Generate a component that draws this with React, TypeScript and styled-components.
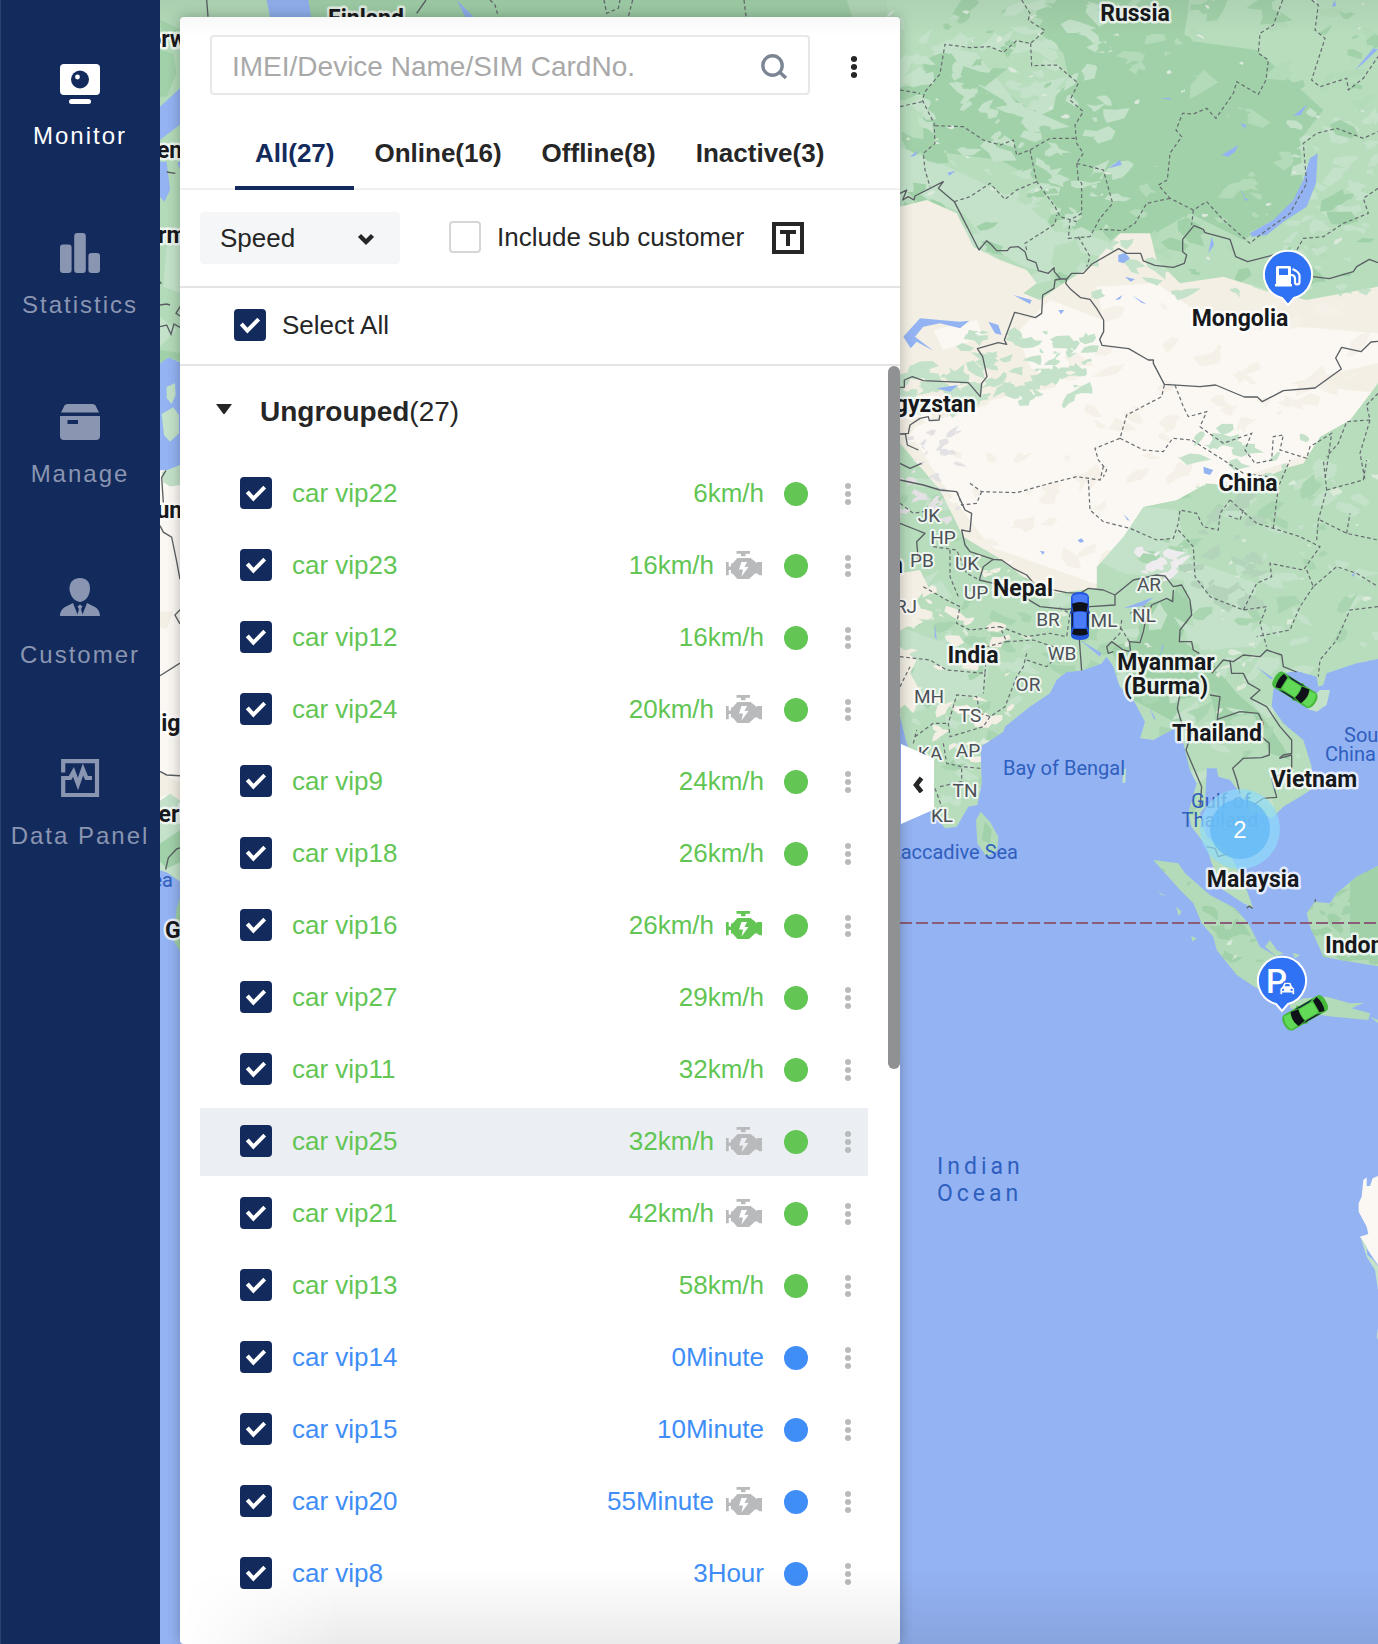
import React, { useId, useState } from 'react';
import styled, { createGlobalStyle } from 'styled-components';

const navy = '#132a5c';
const ink = '#262626';
const green = '#62c554';
const blue = '#3f8ef7';
const sans = '"Liberation Sans", Arial, Helvetica, sans-serif';

const GlobalStyle = createGlobalStyle`
  * { box-sizing: border-box; }
  body { margin: 0; background: #94b3f3; font-family: ${sans}; color: ${ink}; }
  button, input, select { font-family: inherit; color: inherit; }
  button { border: 0; padding: 0; background: none; cursor: pointer; }
`;

/* ---------- page frame ---------- */

const Page = styled.div`
  display: flex;
  min-height: 100vh;
`;

const Sidebar = styled.nav`
  flex: none;
  width: 160px;
  padding-top: 64px;
  display: flex;
  flex-direction: column;
  gap: 83px;
  background: ${navy};
  box-shadow: inset 1px 0 #2b3f6c;
`;

const NavButton = styled.button<{ $active?: boolean }>`
  display: flex;
  flex-direction: column;
  align-items: center;
  gap: 18px;
  font-size: 24px;
  line-height: 28px;
  letter-spacing: 2px;
  white-space: nowrap;
  color: ${(p) => (p.$active ? '#ffffff' : '#8a95b1')};
`;

const Main = styled.main`
  flex: 1;
  min-width: 0;
  display: grid;
  grid-template: minmax(0, 1fr) / minmax(0, 1fr);
  overflow: hidden;
`;

const MapLayer = styled.div`
  grid-area: 1 / 1;
  display: grid;
  contain: size;
`;

const MapSvg = styled.svg`
  display: block;
  width: 100%;
  height: 100%;
`;

const Overlay = styled.div`
  grid-area: 1 / 1;
  z-index: 1;
  display: flex;
  align-items: stretch;
  padding: 17px 0 0 20px;
`;

const TopShade = styled.div`
  grid-area: 1 / 1;
  z-index: 2;
  height: 36px;
  pointer-events: none;
  background: linear-gradient(rgba(0, 0, 0, 0.05), transparent);
`;

const BottomShade = styled.div`
  grid-area: 1 / 1;
  z-index: 2;
  align-self: end;
  height: 76px;
  pointer-events: none;
  background: linear-gradient(transparent, rgba(0, 0, 0, 0.08));
  mask-image: linear-gradient(to right, transparent 20px, #000 180px);
`;

/* ---------- device panel ---------- */

const Panel = styled.section`
  flex: none;
  width: 720px;
  display: flex;
  flex-direction: column;
  background: #ffffff;
  border-radius: 4px;
  box-shadow: 0 0 14px rgba(0, 0, 0, 0.28);
`;

const SearchRow = styled.div`
  display: flex;
  align-items: flex-end;
  gap: 28px;
  padding: 18px 30px 25px;
`;

const SearchBox = styled.label`
  flex: 1;
  display: flex;
  align-items: center;
  height: 60px;
  padding: 2px 20px 0;
  border: 2px solid #e8e8e8;
  border-radius: 4px;
`;

const SearchInput = styled.input`
  flex: 1;
  min-width: 0;
  height: 52px;
  padding: 2px 0 0;
  border: 0;
  outline: 0;
  background: none;
  font-size: 28px;
  &::placeholder { color: #a9a9a9; opacity: 1; }
`;

const MenuButton = styled.button<{ $width: number; $color: string }>`
  width: ${(p) => p.$width}px;
  height: 56px;
  display: grid;
  place-items: center;
  color: ${(p) => p.$color};
`;

const Tabs = styled.div`
  display: flex;
  padding-left: 55px;
  border-bottom: 2px solid #f0f0f0;
`;

const Tab = styled.button<{ $active: boolean }>`
  height: 70px;
  margin-bottom: -2px;
  padding: 0 20px;
  border-bottom: 4px solid ${(p) => (p.$active ? navy : 'transparent')};
  font-size: 26px;
  font-weight: 700;
  color: ${(p) => (p.$active ? navy : ink)};
`;

const FilterRow = styled.div`
  display: flex;
  align-items: center;
  gap: 49px;
  height: 98px;
  padding: 0 20px;
  border-bottom: 2px solid #e4e4e4;
`;

const SelectWrap = styled.div`
  display: grid;
  align-items: center;
  width: 200px;
  & > * { grid-area: 1 / 1; }
  & > svg { justify-self: end; margin-right: 24px; pointer-events: none; }
`;

const Select = styled.select`
  appearance: none;
  width: 100%;
  height: 52px;
  padding: 0 20px;
  border: 0;
  border-radius: 4px;
  background: #f5f6f8;
  font-size: 26px;
`;

const FilterGroup = styled.div`
  display: flex;
  align-items: center;
  gap: 28px;
`;

const CheckLabel = styled.label<{ $gap: number; $color?: string }>`
  display: flex;
  align-items: center;
  gap: ${(p) => p.$gap}px;
  padding-bottom: 2px;
  font-size: 26px;
  line-height: 32px;
  white-space: nowrap;
  color: ${(p) => p.$color ?? ink};
`;

const SelectAllRow = styled.div`
  display: flex;
  align-items: center;
  height: 78px;
  padding-left: 54px;
  border-bottom: 2px solid #e4e4e4;
`;

const Tick = styled.span`
  display: grid;
  width: 32px;
  height: 32px;
  & > * { grid-area: 1 / 1; }
  & > svg { pointer-events: none; }
`;

const TickInput = styled.input`
  appearance: none;
  width: 32px;
  height: 32px;
  margin: 0;
  border: 2px solid #d6d6d6;
  border-radius: 4px;
  background: #ffffff;
  &:checked { border-color: ${navy}; background: ${navy}; }
`;

const ListArea = styled.div`
  flex: 1;
  display: flex;
`;

const List = styled.div`
  flex: 1;
  display: flex;
  flex-direction: column;
  gap: 2px;
  padding: 0 20px 36px;
`;

const GroupHeader = styled.button`
  display: flex;
  align-items: center;
  gap: 28px;
  height: 92px;
  padding-left: 16px;
  font-size: 28px;
  text-align: left;
`;

const Rows = styled.ul`
  display: flex;
  flex-direction: column;
  gap: 4px;
  margin: 0;
  padding: 0;
  list-style: none;
`;

const Row = styled.li<{ $hovered?: boolean }>`
  display: flex;
  align-items: center;
  justify-content: space-between;
  height: 68px;
  padding-left: 40px;
  background: ${(p) => (p.$hovered ? '#ebeef3' : 'transparent')};
`;

const Status = styled.div`
  display: flex;
  align-items: center;
  gap: 20px;
`;

const Reading = styled.span<{ $color: string }>`
  display: flex;
  align-items: center;
  gap: 12px;
  padding-bottom: 2px;
  font-size: 26px;
  line-height: 32px;
  color: ${(p) => p.$color};
`;

const Dot = styled.span<{ $color: string }>`
  width: 24px;
  height: 24px;
  border-radius: 50%;
  background: ${(p) => p.$color};
`;

const Track = styled.div`
  width: 12px;
  display: flex;
  flex-direction: column;
  &::after { content: ''; flex: 45; }
`;

const Thumb = styled.div`
  flex: 55;
  border-radius: 6px;
  background: #8f9193;
`;

const Collapse = styled.button`
  flex: none;
  width: 33px;
  height: 80px;
  margin: 727px 0 0 1px;
  display: grid;
  place-items: center;
  background: #ffffff;
  clip-path: polygon(0 0, 100% 18%, 100% 82%, 0 100%);
`;

/* ---------- icons ---------- */

const MonitorIcon = () => (
  <svg width="40" height="40" viewBox="0 0 40 40" fill="currentColor">
    <rect width="40" height="31" rx="4" />
    <circle cx="20" cy="15.5" r="9" fill={navy} />
    <circle cx="17.5" cy="13" r="2.4" />
    <rect x="9" y="35" width="22" height="5" rx="2.5" />
  </svg>
);
const StatsIcon = () => (
  <svg width="40" height="40" viewBox="0 0 40 40" fill="currentColor">
    <rect y="11.500" width="11.600" height="28.500" rx="3" />
    <rect x="14.200" width="11.600" height="40" rx="3" />
    <rect x="28.400" y="20" width="11.600" height="20" rx="3" />
  </svg>
);
const ManageIcon = () => (
  <svg width="40" height="40" viewBox="0 0 40 40" fill="currentColor">
    <path d="M7.500 2H32.500Q34.500 2 35.500 3.500L39 10.500H1L4.500 3.500Q5.500 2 7.500 2Z" />
    <path fillRule="evenodd" d="M0 14H40V34Q40 38 36 38H4Q0 38 0 34ZM7.500 18V22H18V18Z" />
  </svg>
);
const CustomerIcon = () => (
  <svg width="40" height="52" viewBox="0 0 40 52" fill="currentColor">
    <path d="M20 7C26 7 30 10.500 30 17.500C30 24 26 30.500 20 31C14 30.500 9.500 24 9.500 17.500C9.500 10.500 14 7 20 7Z" />
    <path d="M0 45C0 40 3 36.500 7 35L13 32L17.500 43.500L19 38L17.500 35.500L20 33.500L22.500 35.500L21 38L22.500 43.500L27 32L33 35C37 36.500 40 40 40 45Z" />
  </svg>
);
const DataIcon = () => (
  <svg width="40" height="52" viewBox="0 0 40 52" fill="none" stroke="currentColor" strokeWidth="4.200">
    <path d="M3.200 20.500V9.200H37V43H3.200V26H10L13.500 20L18 32L23 17.500L26.500 26H32" />
  </svg>
);
const SearchIcon = () => (
  <svg width="28" height="28" viewBox="0 0 28 28" fill="none" stroke="#7b8594" strokeWidth="3.400">
    <circle cx="12.500" cy="13.500" r="9.700" />
    <path d="M19.500 20L26 26" />
  </svg>
);
const KebabIcon = () => (
  <svg width="6" height="24" viewBox="0 0 6 24" fill="currentColor">
    <circle cx="3" cy="4" r="3.100" />
    <circle cx="3" cy="12" r="3.100" />
    <circle cx="3" cy="20" r="3.100" />
  </svg>
);
const ChevronIcon = () => (
  <svg width="20" height="16" viewBox="0 0 20 16" fill="none" stroke={ink} strokeWidth="4.400">
    <path d="M3.500 5.500L10 12L16.500 5.500" />
  </svg>
);
const CollapseIcon = () => (
  <svg width="14" height="18" viewBox="0 0 14 18" fill="none" stroke={ink} strokeWidth="4.600">
    <path d="M10.500 3L5 10L10.500 17" />
  </svg>
);
const FrameTIcon = () => (
  <svg width="32" height="32" viewBox="0 0 32 32" fill={ink}>
    <path fillRule="evenodd" d="M0 0H32V32H0ZM4 4V28H28V4Z" />
    <rect x="8" y="8" width="16" height="4" />
    <rect x="14" y="8" width="4" height="16" />
  </svg>
);
const TriangleIcon = () => (
  <svg width="16" height="16" viewBox="0 0 16 16" fill={ink}>
    <path d="M0 0H16L9 9.500Q8 10.500 7 9.500Z" />
  </svg>
);
const EngineIcon = ({ on }: { on: boolean }) => (
  <svg width="38" height="28" viewBox="0 0 38 28" fill={on ? green : '#b9babc'}>
    <path d="M10.500 0H24V2.700H19.500V5.300H15V2.700H10.500Z" />
    <path
      fillRule="evenodd"
      d="M11.500 7H24.500L29 10.500L31 12.500V11H32.500L33.500 11V11H36V24.300H33.500L31 22.500H29L23 28H11.500L6.500 22.500H5V19H2.700V24.300H0V11H2.700V15.500H5V12.500H6.500ZM15.500 11L13 18.500H17L15.500 25.500L22.500 16H18.500L21 11Z"
    />
  </svg>
);

interface CheckProps {
  id: string;
  checked: boolean;
  onToggle: () => void;
}
const CheckBox = ({ id, checked, onToggle }: CheckProps) => (
  <Tick>
    <TickInput id={id} type="checkbox" checked={checked} onChange={onToggle} />
    {checked && (
      <svg width="32" height="32" viewBox="0 0 32 32" fill="none" stroke="#fff" strokeWidth="4">
        <path d="M7.300 14.800L13.400 21.600L24.700 10.200" />
      </svg>
    )}
  </Tick>
);

/* ---------- map ---------- */

const Country = styled.text`
  font: 700 23px Roboto, "Liberation Sans", sans-serif;
  fill: #17191c;
  stroke: rgba(255, 255, 255, 0.75);
  stroke-width: 5px;
  stroke-linejoin: round;
  paint-order: stroke;
`;
const Region = styled.text`
  font: 400 19px Roboto, "Liberation Sans", sans-serif;
  fill: #4c5157;
  stroke: rgba(255, 255, 255, 0.75);
  stroke-width: 4px;
  stroke-linejoin: round;
  paint-order: stroke;
  text-anchor: middle;
`;
const Sea = styled.text`
  font: 400 20px Roboto, "Liberation Sans", sans-serif;
  fill: #2f5fbe;
`;
const Ocean = styled(Sea)`
  font-size: 23px;
  letter-spacing: 4px;
`;
const ClusterCount = styled.text`
  font: 400 24px ${sans};
  fill: #ffffff;
  text-anchor: middle;
`;
const PinLetter = styled.text`
  font: 500 33px Roboto, "Liberation Sans", sans-serif;
  fill: #ffffff;
`;

const countries: [string, number, number, ('start' | 'middle' | 'end')?][] = [
  ['Finland', 366, 26],
  ['Russia', 1135, 21],
  ['Mongolia', 1240, 326],
  ['Kyrgyzstan', 976, 412, 'end'],
  ['China', 1248, 491],
  ['Nepal', 1023, 596],
  ['India', 973, 663],
  ['Myanmar', 1166, 670],
  ['(Burma)', 1166, 694],
  ['Thailand', 1217, 741],
  ['Vietnam', 1314, 787],
  ['Malaysia', 1253, 887],
  ['Indonesia', 1325, 953, 'start'],
  ['Norway', 132, 47, 'start'],
  ['Denmark', 142, 158, 'start'],
  ['Germany', 130, 243, 'start'],
  ['Tunisia', 143, 518, 'start'],
  ['Niger', 145, 731, 'start'],
  ['Nigeria', 123, 822, 'start'],
  ['Gabon', 165, 938, 'start'],
  ['Pakistan', 903, 573, 'end'],
];

const regions: [string, number, number][] = [
  ['JK', 929, 522], ['HP', 943, 544], ['PB', 922, 567], ['UK', 967, 570],
  ['UP', 976, 599], ['AR', 1149, 591], ['BR', 1048, 626], ['ML', 1104, 627],
  ['NL', 1144, 622], ['WB', 1062, 660], ['OR', 1028, 691], ['MH', 929, 703],
  ['TS', 970, 722], ['KA', 930, 760], ['AP', 968, 757], ['TN', 965, 797],
  ['KL', 942, 822], ['RJ', 906, 613],
];

/* Small terrain patches, spread by a fixed seed so the map is the same on every load. */
function patches(seed: number, count: number, x0: number, y0: number, w: number, h: number, size: number) {
  let s = seed;
  const rnd = () => {
    s = (s * 1103515245 + 12345) % 2147483648;
    return s / 2147483648;
  };
  let d = '';
  for (let i = 0; i < count; i++) {
    const cx = x0 + rnd() * w;
    const cy = y0 + rnd() * h;
    const r = size * (0.25 + rnd());
    const tilt = -0.9 + rnd() * 1.6;
    const n = 6 + Math.floor(rnd() * 4);
    for (let k = 0; k < n; k++) {
      const a = (k / n) * Math.PI * 2;
      const q = r * (0.3 + rnd());
      const px = Math.cos(a) * q * 1.4;
      const py = Math.sin(a) * q * 0.7;
      const x = cx + px * Math.cos(tilt) - py * Math.sin(tilt);
      const y = cy + px * Math.sin(tilt) + py * Math.cos(tilt);
      d += `${k ? 'L' : 'M'}${x.toFixed(1)} ${y.toFixed(1)}`;
    }
    d += 'Z';
  }
  return d;
}

const north = 'translate(890 0) scale(.33333)';
const middle = 'translate(890 460) scale(.33333)';
const south = 'translate(890 860) scale(.33333)';
const africa = 'translate(0 440) scale(.33333 .35714)';

const asia =
  'M-700 -1400H1500V590L1400 610L1310 640L1300 675L1285 680L1280 650L1220 632L1180 640L1150 690L1145 740L1180 790L1240 840L1265 920L1262 990L1230 1010L1180 1040L1145 1075L1110 1060L1080 1060L1050 1000L1020 960L985 950L980 925H950L945 1040L930 1060L950 1130L1000 1165L1030 1200L1070 1290L1090 1345L1060 1330L1000 1290L965 1210L950 1160L905 1100L895 1060L920 970L900 930L880 850L860 800L835 815L790 840L750 835L765 785L730 720L690 680L670 620L650 590L635 610L575 632L530 635L500 660L480 700L420 740L345 800L340 815L272 860L275 970L262 1035L235 1040L200 1100L165 1105L130 1060L90 950L50 850L30 770L-700 770Z';
const sand =
  'M30 620L110 600L200 640L250 740L330 780L410 810L440 850L400 880L450 900L520 850L600 800L690 700L780 700L800 780L870 850L1000 830L1130 870L1250 900L1464 860V1150L1380 1260L1290 1310L1240 1390L1200 1400L1060 1460L950 1450L860 1500L760 1520L700 1610L620 1700V1765L500 1780L400 1730L320 1670L220 1610L150 1470L30 1330Z';

const CarTop = ({ x, y, turn, body, glow }: { x: number; y: number; turn: number; body: string; glow: string }) => (
  <g transform={`translate(${x} ${y}) rotate(${turn})`}>
    <rect x="-10" y="-5" width="20" height="3" rx="1" fill={body} />
    <path d="M-9 -19Q-8 -24 0 -24Q8 -24 9 -19L9 20Q8 24 0 24Q-8 24 -9 20Z" fill={body} />
    <path d="M-7.500 -20Q0 -24 7.500 -20L7 -13H-7Z" fill={glow} />
    <path d="M-8 -12Q0 -16 8 -12L6.500 -4Q0 -6 -6.500 -4Z" fill="#10121a" />
    <rect x="-6" y="-4" width="12" height="16" rx="2" fill={glow} />
    <path d="M-8.500 -8L-7 -2V9L-8.500 14ZM8.500 -8L7 -2V9L8.500 14Z" fill="#182238" />
    <path d="M-6.500 13H6.500L8 18Q0 21 -8 18Z" fill="#10121a" />
  </g>
);

const WorldMap = () => (
  <MapSvg viewBox="160 0 1218 1644" preserveAspectRatio="xMinYMin slice" role="img" aria-label="Map">
    <defs>
      <clipPath id="asia-land"><path d={asia} transform={middle} /></clipPath>
      <clipPath id="asia-sand"><path d={sand} transform={north} /></clipPath>
      <clipPath id="islands">
        <path transform={south} d="M790 0L865 10L885 40L960 105L1035 145L1075 190L1110 260L1160 290L1150 370L1100 385L1040 345L980 270L970 230L935 190L910 130L870 90ZM1500 0L1400 50L1340 100L1320 130L1275 125L1250 160L1260 200L1300 290L1350 300L1500 325Z" />
      </clipPath>
    </defs>
    <rect x="160" width="1218" height="1644" fill="#94b3f3" />

    {/* mainland */}
    <g clipPath="url(#asia-land)">
      <rect x="160" width="1218" height="940" fill="#b7ddbd" />
      <path transform={north} fill="#a1d1a9" d="M500 0L900 0L880 120L1100 150L1300 330L1230 420L1240 600L1060 720L900 640L760 720L640 690L560 700L440 540L330 480L100 450L100 180L180 150L420 330L540 250L520 160L440 90Z" />
      <path transform={north} fill="#c3e2c9" d="M170 140L260 160L380 310L540 380L420 400L340 300L240 240ZM30 440L130 480L260 540L420 620L500 700L480 820L400 800L300 740L220 640L100 590L30 600Z" />
      <path transform={middle} fill="#c3e2c9" d="M620 300L760 140L860 150L900 300L1100 370L1080 560L930 570L880 360L700 340ZM30 500L300 600L280 700L60 760Z" />
      <path transform={middle} fill="#a1d1a9" d="M760 430L840 420L870 370L910 450L870 540L960 600L1040 700L1110 760L1180 860L1200 900L1140 880L1090 760L980 780L960 700L860 720L880 800L730 720L660 560L740 540Z" />
      <path d={patches(11, 150, 890, 0, 230, 280, 11)} fill="#c3e2c9" />
      <path d={patches(12, 40, 1120, 0, 260, 280, 10)} fill="#b3dab9" />
      <path d={patches(13, 50, 1290, 110, 90, 180, 9)} fill="#c3e2c9" />
      <path d={patches(23, 120, 890, 0, 490, 300, 11)} fill="#a1d1a9" />
      <path d={patches(41, 150, 890, 460, 490, 360, 11)} fill="#c3e2c9" />
      <path d={patches(57, 110, 890, 460, 490, 360, 10)} fill="#a9d5b0" />
      <path d={patches(71, 60, 890, 460, 490, 300, 4)} fill="#dcebd9" />
      <path d={patches(5, 60, 890, 0, 490, 280, 3)} fill="#dbe9dc" />
      <path d={patches(77, 46, 890, 570, 130, 190, 8)} fill="#f3efe4" />
      <path transform={middle} fill="#f3efe4" d="M30 340L90 330L115 380L80 420L100 460L60 500H30ZM30 560L80 600L60 640L95 700L70 760L30 720Z" />
      <path d={sand} transform={north} fill="#f3efe4" />
      <g clipPath="url(#asia-sand)">
        <path transform={north} fill="#fbf8f3" d="M480 900L640 960L620 860L800 850L900 920L1100 970L1464 1000V1090L1200 1150L1464 1180V1300L900 1480L640 1760L300 1640L150 1440L60 1300L330 1200L500 1160L420 1100L380 1000ZM130 990L260 960L280 1010L160 1050Z" />
        <path d={patches(91, 60, 900, 380, 400, 200, 12)} fill="#fbf8f3" />
        <path d={patches(33, 60, 1050, 300, 320, 180, 11)} fill="#f5f1e8" />
        <path d={patches(44, 30, 940, 440, 260, 120, 9)} fill="#f5f1e8" />
        <path d={patches(15, 60, 960, 330, 130, 70, 8)} fill="#c3e2c9" />
        <path d={patches(18, 46, 890, 370, 90, 40, 9)} fill="#c3e2c9" />
        <path d={patches(29, 40, 1090, 220, 290, 75, 9)} fill="#c3e2c9" />
        <path d={patches(64, 34, 1180, 430, 200, 70, 11)} fill="#c3e2c9" />
      </g>
      <path d={patches(8, 40, 890, 430, 70, 90, 6)} fill="#e3e1e3" />
      <path d={patches(9, 12, 1130, 550, 50, 26, 8)} fill="#eeecee" />
      <path d={patches(6, 30, 1190, 490, 70, 120, 10)} fill="#b3d4ba" />

      {/* lakes and rivers */}
      <g transform={north} fill="#94b3f3">
        <path d="M1283 460L1278 550L1250 620L1180 665L1130 705L1085 710L1080 700L1150 660L1210 600L1240 540L1260 475Z" />
        <path d="M40 1010L90 955L210 965L238 962L210 985L150 970L100 980L75 1010L130 1052L80 1025L62 1045Z" />
        <path d="M995 465L1045 435L1035 455L1015 470ZM655 505L690 480L695 495ZM1210 348L1252 313L1232 345ZM685 765L705 758L720 775L700 790L685 785ZM955 760L965 710L972 735ZM370 885L425 900L420 912ZM295 965L325 975L335 1005L315 1000ZM140 1165L205 1155L180 1175ZM60 470L85 450L75 468ZM172 518L197 512L178 527ZM1050 370L1068 375L1066 387ZM705 830L735 838L722 845ZM675 900L697 885L690 898ZM725 885L770 913L755 908ZM505 930L523 930L513 943ZM810 293L843 295L840 300ZM940 1400L970 1410L960 1425L942 1420ZM1395 210L1450 145L1464 148L1420 190ZM1335 0L1325 20L1338 18ZM1050 560L1065 595L1078 600L1065 602Z" />
      </g>
      <g transform={middle} fill="#94b3f3">
        <path d="M563 240L575 235L582 245L570 248ZM450 272L465 275L458 284ZM700 162L720 182L712 180ZM1100 620L1150 655L1142 658ZM700 445L790 412L760 438ZM810 590L818 550L820 560ZM780 745L798 780L790 775ZM1385 345L1398 335L1390 350ZM570 540L635 580L630 590ZM135 490L140 540L134 530Z" />
      </g>
    </g>

    {/* borders */}
    <g fill="none" stroke="#5a5f63" strokeWidth="4" strokeLinejoin="round">
      <path transform={north} d="M30 580L50 570L38 600L55 590L72 600L75 588L160 545L145 565L193 605L267 750L290 722L305 735L320 752H352L360 742L385 740L405 755L412 778L438 788L445 812L475 820L492 803L493 815L512 837L495 840L492 865L458 885L455 940L436 953L374 937L343 1020L350 1033L325 1028L262 1046L278 1070L291 1130L275 1150L271 1190L250 1165L235 1148L100 1142L67 1130L43 1140V1162H30M512 837H530L545 820H580L606 792L686 746L710 760H752L760 783L795 796L850 802L883 790L890 765L878 755V718L912 677L940 688L945 698L1020 718L1037 770L1073 785L1150 765M1268 830L1318 836L1390 815L1400 800L1438 778L1464 788M530 837L527 850L542 868L572 893L600 898L620 925L641 960V995L629 1018L636 1036L716 1046L775 1080H790V1090L823 1153L930 1160L977 1155L1063 1191H1102L1117 1205L1180 1172L1275 1164L1354 1107L1337 1074L1355 1042L1413 1055L1443 1026L1464 1024M30 1302L55 1300L60 1275L90 1255L115 1250L118 1262L147 1260L150 1245M46 1300L52 1335L85 1350" />
      <path transform={middle} d="M30 10L60 25L95 10M30 60L100 75L150 90L200 95L225 150L245 160L240 215L215 210L225 255L240 275L310 298L335 300L370 325L410 345L440 380L530 398L570 400L595 385L640 390L675 405V435L600 440L530 448L450 440L400 410L310 370L268 360L280 320L310 298M30 190L80 210L105 220L80 245L85 300M675 405L730 360L800 345L825 348L850 380L875 375L900 420L905 465L870 510L868 545L905 545L910 570L928 580M765 490L760 515L750 548L718 545L722 575L700 570L665 545L650 560L655 580L670 575M850 390L848 425L830 415L785 435L765 490M568 540L575 632M965 640L1000 600L1030 605L1060 585L1110 590L1130 570L1175 585L1180 620L1220 636M1020 600L1025 640L1060 640L1075 670L1110 690L1082 715L1130 740L1170 800L1205 840V880L1180 885L1168 895M960 705L990 710L982 778L1050 755L1105 760L1120 790L1108 825L1138 850V885L1115 893L1060 895L1028 925L1040 960L1050 1000M870 700L862 745L878 800L905 820L888 870L935 980L930 1040M1168 895L1205 885V930L1145 955L1160 1012L1120 1015L1090 1035M950 1160L975 1165L985 1190L1018 1180" />
      <path transform={south} d="M1276 118V132L1302 157L1355 152L1372 134L1412 146L1445 138L1450 112L1464 98M1430 35L1450 50L1464 25M1070 145L1078 138L1088 145" />
    </g>
    <g fill="none" stroke="#676c70" strokeWidth="3.600" strokeDasharray="11 8">
      <path transform={north} d="M395 0L420 40L415 60L465 92L422 130L380 122L340 157L300 140L240 143L165 133L150 222L105 275L97 300L132 370L135 430L100 460L105 510L120 560M422 130L425 197L500 195L565 250L540 300L580 335L555 375L560 430L580 460L560 490L565 540L575 550V640L540 660L535 715L600 710M135 377L220 380L280 420L330 435L370 420L380 465L420 450L480 415H555M420 450L440 545L495 620L510 650L560 665M560 490L640 510L668 610L630 655L600 710M193 605L240 590L300 550L345 598L380 570L440 545M410 750L405 730L460 695L495 672L500 645M1178 0L1150 75L1110 100L1105 160L1135 180L1128 240L1105 283L1040 245L1030 280L978 355L950 325L910 342L878 340L858 390L875 410L840 460L832 540L805 555L840 595L910 630L950 605L1000 660L1080 730L1110 705L1200 640L1250 550L1240 430L1280 400L1340 385L1420 415L1464 395M840 595L770 610L735 670L700 692L630 688M1265 0L1285 15L1275 90L1305 115L1265 240L1290 260L1370 235L1375 270L1420 235L1464 170M910 630L905 675M1464 565L1420 595L1435 640L1360 670L1300 710L1240 715L1215 760M565 710L600 770L590 800M823 1155L815 1190L710 1245L690 1315L615 1345L625 1380L650 1410L640 1430M855 1155L880 1220L895 1250L950 1235L930 1280L1000 1330L1085 1300L1065 1350L1095 1390L1145 1380L1150 1310L1180 1305L1170 1350L1250 1375L1260 1340L1325 1300L1305 1440M690 1315L760 1350L820 1355L848 1315L905 1320L1000 1380L1060 1420L1135 1430M1464 1180L1430 1215L1440 1260L1370 1265L1345 1330L1310 1370M1440 1260L1410 1360L1425 1440M30 270L90 280M30 320L97 305" />
      <path transform={middle} d="M240 70L275 95L380 98L480 70L560 50L630 60L640 20M275 95L260 130L215 135L200 90M595 60L600 150L640 185L720 205L800 240L850 235L865 190L870 150L920 160L940 200L985 210L990 160L1020 120M865 210L910 260L915 350L960 410L1010 430L1060 450L1130 440L1110 490L1130 560M1020 120L1100 190L1150 205L1230 230L1290 260L1240 330L1140 310L1145 350L1100 370L1060 450M1150 205L1165 80L1200 0M1250 330L1270 380L1340 320L1400 340L1464 380M1270 380L1230 440L1200 510L1100 530M1280 240L1285 180L1310 90L1300 0M1310 90L1420 60L1430 0M1290 180L1370 220L1464 240M1370 220L1380 160M1464 440L1380 450L1340 540L1290 600L1285 650M1060 150L1050 180L1010 165M30 130L70 160L130 150M130 260L200 270L230 340L268 360M100 380L170 420L210 440L200 490L240 510L330 500L350 545M180 270L180 350L205 410M330 500L410 530L480 520L530 530L540 460L500 440M350 545L430 540L490 560M410 580L400 620L380 650L345 740L300 770L280 800L180 830L175 790L200 705L260 710L270 760L300 770M30 590L120 600L170 630L285 640L290 560L350 545M285 640L280 700M30 680L60 620M75 830L130 790L175 790M70 850L80 810M160 850L170 910L215 920L272 925M150 980L215 965L215 920M135 985L155 1040M410 600L470 620L500 590M695 480L690 520L665 545M718 545L690 500M765 440L720 460" />
    </g>

    {/* islands */}
    <path transform={middle} fill="#c3e2c9" d="M1250 730L1290 690L1320 690L1310 735L1280 755L1255 748ZM700 930L708 925L706 968L697 968Z" />
    <path transform={middle} fill="#b3dab9" d="M272 1055L300 1085L325 1130L322 1170L290 1190L262 1150L258 1080Z" />
    <path transform={middle} fill="#a1d1a9" d="M285 1085L305 1110L300 1150L275 1140Z" />
    <g clipPath="url(#islands)">
      <rect x="1140" y="850" width="240" height="150" fill="#b3dab9" />
      <path d={patches(19, 80, 1140, 850, 240, 150, 8)} fill="#a1d1a9" />
      <path d={patches(20, 24, 1140, 850, 240, 150, 3)} fill="#d7ebda" />
      <rect x="1350" y="860" width="30" height="100" fill="#a1d1a9" />
    </g>
    <path transform={south} fill="#b3dab9" d="M1200 430L1240 415L1310 410L1380 430L1422 428L1385 445L1440 460L1435 480L1330 470L1290 465L1200 445ZM1440 470L1464 480V490ZM1125 260L1140 240L1160 270L1180 280L1160 290ZM1208 278L1230 285L1215 295ZM858 140L875 155L866 168ZM903 228L920 235L908 246ZM802 95L828 107L815 105Z" />
    <path transform={south} fill="#fbf8f3" d="M1500 945L1464 948L1448 955L1440 978H1430V952L1420 960L1415 1010L1406 1030V1055L1430 1100L1435 1122L1410 1130L1440 1180L1464 1215L1500 1230Z" />
    <path transform={south} fill="#c3e2c9" d="M1412 1132L1430 1160L1432 1185L1450 1200L1464 1218V1290L1455 1230L1430 1190ZM1464 1405L1460 1430L1464 1440Z" />

    {/* western edge */}
    <g transform="scale(.33333)">
      <path fill="#b3dab9" d="M480 0H2660V60H480Z" />
      <path fill="#a1d1a9" d="M800 0H2540L2560 60H900Z" />
      <path fill="#b3dab9" d="M480 0H545V260L480 320ZM480 420L545 370V1090L505 1072L480 1090Z" />
      <path fill="#a1d1a9" d="M480 150L520 160L530 220L500 290H480ZM480 60L545 90V130H490ZM480 1050L545 1060V1085L505 1072L480 1090Z" />
      <path fill="#c3e2c9" d="M500 740L540 730V880L490 860ZM480 950L530 990L480 1040Z" />
      <path fill="#94b3f3" d="M480 485H500L510 570L493 605L480 590ZM532 490L545 480V520ZM800 0H925L935 60H812ZM1370 0L1430 60H1400Z" />
      <path fill="#c3e2c9" d="M500 1160L525 1150L527 1185L515 1212L500 1195ZM485 1242L520 1222L537 1245V1300L510 1325L492 1305Z" />
    </g>
    <g transform={africa}>
      <path fill="#fbf8f3" d="M480 85H545V1010H480Z" />
      <path fill="#c3e2c9" d="M485 90L545 68V125L510 130L490 118ZM480 1010L510 990L545 1010V1240L500 1210L480 1205Z" />
      <path fill="#f3efe4" d="M480 480H520L500 530L480 525ZM480 930L540 960V1010L510 990L480 1000Z" />
      <path fill="#a1d1a9" d="M480 1130L545 1090V1180L500 1200L480 1180ZM545 1270L530 1310L520 1400L545 1440Z" />
    </g>
    <g fill="none" stroke="#5a5f63" strokeWidth="4">
      <path transform="scale(.33333)" d="M480 845L484 852M480 915L500 912L510 915M480 980L500 975L513 1003L522 972L540 982M540 920L528 940L540 948M500 516L526 520M620 0L624 50M1278 0L1250 40" />
      <path transform={africa} d="M498 85L485 105L490 175M480 240L490 258L515 272L530 340L540 390M540 475L525 490L540 515M480 660L540 625M480 928L500 938L540 940M497 1203L505 1170L530 1145L540 1142" />
    </g>
    <path transform="scale(.33333)" fill="none" stroke="#676c70" strokeWidth="4" strokeDasharray="11 8" d="M1470 0L1485 15L1495 50M1812 0L1820 40L1855 25L1860 0M1898 0L1885 50M2232 0L2238 50" />

    <path d="M900 923H1378" stroke="#8a5c78" strokeWidth="2" strokeDasharray="12 4" />

    {regions.map(([name, x, y]) => <Region key={name} x={x} y={y}>{name}</Region>)}
    {countries.map(([name, x, y, anchor]) => (
      <Country key={name} x={x} y={y} textAnchor={anchor ?? 'middle'}>{name}</Country>
    ))}
    <Sea x="1064" y="775" textAnchor="middle">Bay of Bengal</Sea>
    <Sea x="1018" y="859" textAnchor="end">Laccadive Sea</Sea>
    <Sea x="1344" y="742">South</Sea>
    <Sea x="1325" y="761">China Sea</Sea>
    <Sea x="1221" y="808" textAnchor="middle">Gulf of</Sea>
    <Sea x="1220" y="827" textAnchor="middle">Thailand</Sea>
    <Sea x="173" y="887" textAnchor="end">Gulf of Guinea</Sea>
    <Ocean x="937" y="1174">Indian</Ocean>
    <Ocean x="937" y="1201">Ocean</Ocean>

    {/* markers */}
    <CarTop x={1080} y={616} turn={0} body="#2355dd" glow="#4a7cf8" />
    <CarTop x={1295} y={690} turn={122} body="#46b83c" glow="#62d957" />
    <CarTop x={1305} y={1013} turn={240} body="#46b83c" glow="#62d957" />

    <circle cx="1240" cy="829" r="40" fill="#8fdcf8" opacity=".7" />
    <circle cx="1240" cy="829" r="30" fill="#62b8f6" opacity=".75" />
    <ClusterCount x="1240" y="838">2</ClusterCount>

    <g transform="translate(1288 276)">
      <path d="M-6 22L0 29L6 22A24 24 0 1 0 -6 22Z" fill="#2f72f3" stroke="#fff" strokeWidth="2" />
      <path d="M-5 21L0 27L5 21Z" fill="#2f72f3" />
      <path fillRule="evenodd" fill="#fff" d="M-10.500 -10H1.500Q3 -10 3 -8.500V8H4V10.500H-13V8H-12V-8.500Q-12 -10 -10.500 -10ZM-9 -7.500V-1H0V-7.500Z" />
      <path d="M3 -1Q7 -1 7 3V6Q7 8.500 9 8.500Q11.500 8.500 11.500 6V0Q11.500 -4 4.500 -7" fill="none" stroke="#fff" strokeWidth="2.200" />
    </g>
    <g transform="translate(1282 981)">
      <path d="M-6 23L0 30L6 23A24 24 0 1 0 -6 23Z" fill="#2f72f3" stroke="#fff" strokeWidth="2" />
      <PinLetter x="-16" y="12">P</PinLetter>
      <g transform="translate(-1 0) scale(1.15)">
        <path d="M-1 12V6.500L1 4.500L2.500 1H8.500L10 4.500L12 6.500V12H9.500V10.500H1.500V12Z" fill="#fff" stroke="#2f72f3" strokeWidth="1" />
        <path d="M3 4.500L4 2.500H7L8 4.500Z" fill="#2f72f3" />
        <circle cx="1.800" cy="7.800" r="1" fill="#2f72f3" />
        <circle cx="9.200" cy="7.800" r="1" fill="#2f72f3" />
      </g>
    </g>
  </MapSvg>
);

/* ---------- data ---------- */

interface Device {
  name: string;
  value: string;
  state: 'moving' | 'idle';
  engine?: 'on' | 'off';
}

const devices: Device[] = [
  { name: 'car vip22', value: '6km/h', state: 'moving' },
  { name: 'car vip23', value: '16km/h', state: 'moving', engine: 'off' },
  { name: 'car vip12', value: '16km/h', state: 'moving' },
  { name: 'car vip24', value: '20km/h', state: 'moving', engine: 'off' },
  { name: 'car vip9', value: '24km/h', state: 'moving' },
  { name: 'car vip18', value: '26km/h', state: 'moving' },
  { name: 'car vip16', value: '26km/h', state: 'moving', engine: 'on' },
  { name: 'car vip27', value: '29km/h', state: 'moving' },
  { name: 'car vip11', value: '32km/h', state: 'moving' },
  { name: 'car vip25', value: '32km/h', state: 'moving', engine: 'off' },
  { name: 'car vip21', value: '42km/h', state: 'moving', engine: 'off' },
  { name: 'car vip13', value: '58km/h', state: 'moving' },
  { name: 'car vip14', value: '0Minute', state: 'idle' },
  { name: 'car vip15', value: '10Minute', state: 'idle' },
  { name: 'car vip20', value: '55Minute', state: 'idle', engine: 'off' },
  { name: 'car vip8', value: '3Hour', state: 'idle' },
];

const navItems = [
  { label: 'Monitor', Icon: MonitorIcon },
  { label: 'Statistics', Icon: StatsIcon },
  { label: 'Manage', Icon: ManageIcon },
  { label: 'Customer', Icon: CustomerIcon },
  { label: 'Data Panel', Icon: DataIcon },
];

const tabs = ['All(27)', 'Online(16)', 'Offline(8)', 'Inactive(3)'];

const DeviceRow = ({ device, hovered, checked, onToggle }: { device: Device; hovered: boolean; checked: boolean; onToggle: () => void }) => {
  const id = useId();
  const color = device.state === 'moving' ? green : blue;
  return (
    <Row $hovered={hovered}>
      <CheckLabel $gap={20} $color={color} htmlFor={id}>
        <CheckBox id={id} checked={checked} onToggle={onToggle} />
        {device.name}
      </CheckLabel>
      <Status>
        <Reading $color={color}>
          {device.value}
          {device.engine && <EngineIcon on={device.engine === 'on'} />}
        </Reading>
        <Dot $color={color} />
        <MenuButton $width={40} $color="#b9babc" aria-label={`More for ${device.name}`}>
          <KebabIcon />
        </MenuButton>
      </Status>
    </Row>
  );
};

export default function App() {
  const [tab, setTab] = useState(tabs[0]);
  const [subCustomers, setSubCustomers] = useState(false);
  const [selected, setSelected] = useState<string[]>(devices.map((d) => d.name));
  const allSelected = selected.length === devices.length;

  const toggle = (name: string) =>
    setSelected((s) => (s.includes(name) ? s.filter((n) => n !== name) : [...s, name]));

  return (
    <>
      <GlobalStyle />
      <Page>
        <Sidebar aria-label="Main">
          {navItems.map(({ label, Icon }, i) => (
            <NavButton key={label} $active={i === 0}>
              <Icon />
              {label}
            </NavButton>
          ))}
        </Sidebar>
        <Main>
          <MapLayer><WorldMap /></MapLayer>
          <Overlay>
            <Panel aria-label="Devices">
              <SearchRow>
                <SearchBox>
                  <SearchInput aria-label="Search devices" placeholder="IMEI/Device Name/SIM CardNo." />
                  <SearchIcon />
                </SearchBox>
                <MenuButton $width={32} $color={ink} aria-label="More options"><KebabIcon /></MenuButton>
              </SearchRow>
              <Tabs role="tablist">
                {tabs.map((t) => (
                  <Tab key={t} role="tab" aria-selected={t === tab} $active={t === tab} onClick={() => setTab(t)}>{t}</Tab>
                ))}
              </Tabs>
              <FilterRow>
                <SelectWrap>
                  <Select aria-label="Sort by" defaultValue="Speed"><option>Speed</option></Select>
                  <ChevronIcon />
                </SelectWrap>
                <FilterGroup>
                  <CheckLabel $gap={16} htmlFor="sub-customer">
                    <CheckBox id="sub-customer" checked={subCustomers} onToggle={() => setSubCustomers((v) => !v)} />
                    Include sub customer
                  </CheckLabel>
                  <FrameTIcon />
                </FilterGroup>
              </FilterRow>
              <SelectAllRow>
                <CheckLabel $gap={16} htmlFor="select-all">
                  <CheckBox id="select-all" checked={allSelected} onToggle={() => setSelected(allSelected ? [] : devices.map((d) => d.name))} />
                  Select All
                </CheckLabel>
              </SelectAllRow>
              <ListArea>
                <List>
                  <GroupHeader aria-expanded="true">
                    <TriangleIcon />
                    <span><strong>Ungrouped</strong>(27)</span>
                  </GroupHeader>
                  <Rows>
                    {devices.map((d) => (
                      <DeviceRow
                        key={d.name}
                        device={d}
                        hovered={d.name === 'car vip25'}
                        checked={selected.includes(d.name)}
                        onToggle={() => toggle(d.name)}
                      />
                    ))}
                  </Rows>
                </List>
                <Track><Thumb /></Track>
              </ListArea>
            </Panel>
            <Collapse aria-label="Collapse panel"><CollapseIcon /></Collapse>
          </Overlay>
          <TopShade />
          <BottomShade />
        </Main>
      </Page>
    </>
  );
}
